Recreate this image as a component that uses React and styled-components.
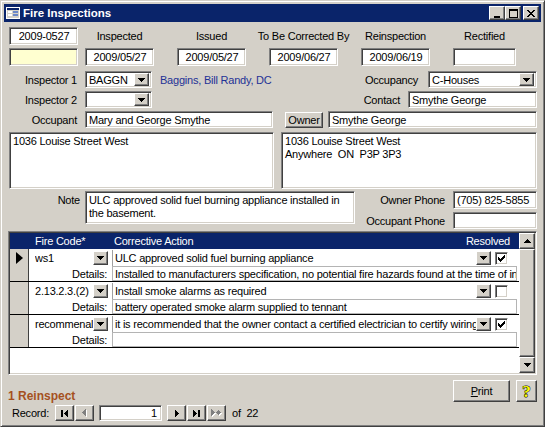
import React from 'react';
import styled, { createGlobalStyle, css } from 'styled-components';

const FACE = '#d4d0c8';
const NAVY = '#0a246a';

const GlobalStyle = createGlobalStyle`
  * { box-sizing: border-box; }
  html, body { margin: 0; padding: 0; background: ${FACE}; }
  body {
    font-family: "Liberation Sans", Arial, sans-serif;
    font-size: 11px;
    letter-spacing: -0.22px;
    color: #000;
  }
`;

const raised = css`
  background: ${FACE};
  border: 1px solid;
  border-color: #ffffff #404040 #404040 #ffffff;
  box-shadow: inset -1px -1px 0 #808080;
`;

const sunken = css`
  border: 1px solid;
  border-color: #808080 #ffffff #ffffff #808080;
  box-shadow: inset 1px 1px 0 #404040, inset -1px -1px 0 ${FACE};
`;

/* ---------- window chrome ---------- */
const Window = styled.div`
  width: 545px;
  height: 427px;
  display: flex;
  flex-direction: column;
  padding: 3px;
  background: ${FACE};
  border: 1px solid;
  border-color: ${FACE} #404040 #404040 ${FACE};
  box-shadow: inset 1px 1px 0 #ffffff, inset -1px -1px 0 #808080;
`;

const TitleBar = styled.div`
  flex: none;
  height: 18px;
  display: flex;
  align-items: center;
  padding: 0 2px;
  background: ${NAVY};
  color: #fff;
`;

const TitleText = styled.span`
  flex: 1;
  margin-left: 3px;
  font-weight: bold;
  font-size: 11.5px;
  letter-spacing: 0;
  white-space: nowrap;
`;

const CaptionButton = styled.div`
  ${raised}
  width: 16px;
  height: 14px;
  margin-left: ${(p) => p.$ml || 0}px;
  display: flex;
  align-items: center;
  justify-content: center;
`;

/* ---------- form body ---------- */
const Body = styled.div`
  flex: 1;
  display: flex;
  flex-direction: column;
  padding: 5px 4px 0 5px;
  min-height: 0;
`;

const DateGrid = styled.div`
  flex: none;
  display: grid;
  grid-template-columns: 76px 92px 92px 92px 92px 63px;
  grid-template-rows: 18px 18px;
  row-gap: 3px;
`;

const ColLabel = styled.div`
  width: ${(p) => p.$w || 69}px;
  display: flex;
  justify-content: center;
  align-items: center;
  white-space: nowrap;
`;

const Row = styled.div`
  flex: none;
  display: flex;
  align-items: ${(p) => p.$align || 'center'};
  height: ${(p) => p.$h}px;
  margin-top: ${(p) => p.$mt || 0}px;
`;

const Label = styled.span`
  flex: none;
  width: ${(p) => (p.$w ? `${p.$w}px` : 'auto')};
  text-align: right;
  padding-right: ${(p) => p.$pr ?? 8}px;
  padding-top: ${(p) => p.$pt || 0}px;
  margin-left: ${(p) => (p.$push ? 'auto' : '0')};
  white-space: nowrap;
`;

const Box = styled.div`
  ${sunken}
  flex: ${(p) => (p.$grow ? '1 1 0' : 'none')};
  width: ${(p) => (p.$w ? `${p.$w}px` : 'auto')};
  height: ${(p) => p.$h || 18}px;
  margin-left: ${(p) => p.$ml || 0}px;
  background: ${(p) => p.$bg || '#ffffff'};
  padding: 1px 2px 1px 3px;
  display: flex;
  align-items: center;
  justify-content: ${(p) => (p.$center ? 'center' : 'flex-start')};
  white-space: nowrap;
  overflow: hidden;
`;

const MemoBox = styled(Box)`
  display: block;
  align-items: initial;
  padding: 2px 2px 1px 3px;
  line-height: 13px;
  white-space: nowrap;
`;

const ComboBox = styled(Box)`
  padding: 2px 2px 2px 3px;
`;

const ComboText = styled.span`
  flex: 1;
  overflow: hidden;
  white-space: nowrap;
`;

const DropButton = styled.div`
  ${raised}
  flex: none;
  width: ${(p) => p.$w || 15}px;
  height: ${(p) => p.$h || 13}px;
  display: flex;
  align-items: center;
  justify-content: center;
`;

const LinkText = styled.span`
  flex: 1;
  margin-left: 8px;
  color: #1f3296;
  white-space: nowrap;
`;

const PushButton = styled.button`
  ${raised}
  flex: none;
  width: ${(p) => p.$w}px;
  height: ${(p) => p.$h}px;
  margin-left: ${(p) => p.$ml || 0}px;
  padding: 0;
  font: inherit;
  letter-spacing: inherit;
  color: #000;
  display: flex;
  align-items: center;
  justify-content: center;
`;

const PhoneGrid = styled.div`
  margin-left: auto;
  display: grid;
  grid-template-columns: auto 84px;
  grid-template-rows: 18px 17px;
  row-gap: 3px;
  align-items: center;
`;

/* ---------- subform ---------- */
const Subform = styled.div`
  ${sunken}
  flex: none;
  height: 144px;
  margin: 2px 0 0 -1px;
  padding: 1px;
  background: #ffffff;
  display: flex;
`;

const SubMain = styled.div`
  flex: 1;
  display: flex;
  flex-direction: column;
  min-width: 0;
`;

const SubHeader = styled.div`
  flex: none;
  height: 16px;
  display: flex;
  align-items: center;
  background: ${NAVY};
  color: #fff;
  white-space: nowrap;
`;

const HeadCell = styled.span`
  flex: none;
  width: ${(p) => (p.$w ? `${p.$w}px` : 'auto')};
  padding-left: ${(p) => p.$pl || 0}px;
  padding-right: ${(p) => p.$pr || 0}px;
  margin-left: ${(p) => (p.$push ? 'auto' : '0')};
`;

const Record = styled.div`
  flex: none;
  height: 33px;
  display: flex;
  border-bottom: 1px solid #000;
`;

const Selector = styled.div`
  flex: none;
  width: 19px;
  background: ${FACE};
  border-right: 1px solid #404040;
  display: flex;
  justify-content: center;
  padding-top: 3px;
`;

const CurrentArrow = styled.div`
  width: 0;
  height: 0;
  border-left: 7px solid #000;
  border-top: 6px solid transparent;
  border-bottom: 6px solid transparent;
`;

const RecordBody = styled.div`
  flex: 1;
  display: flex;
  flex-direction: column;
  padding-top: 1px;
`;

const RecLine = styled.div`
  display: flex;
  align-items: center;
  height: ${(p) => p.$h}px;
`;

const CodeCombo = styled.div`
  flex: none;
  width: 77px;
  height: 16px;
  margin-left: 2px;
  display: flex;
  align-items: center;
  padding-left: 4px;
  overflow: hidden;
  white-space: nowrap;
`;

const ActionCombo = styled.div`
  flex: none;
  width: 379px;
  height: 16px;
  margin-left: 4px;
  border-left: 1px solid #a0a0a0;
  display: flex;
  align-items: center;
  padding-left: 2px;
  overflow: hidden;
`;

const DetailsLabel = styled.span`
  flex: none;
  width: 77px;
  margin-left: 2px;
  text-align: right;
  padding-right: 1px;
  white-space: nowrap;
`;

const DetailsBox = styled.div`
  flex: none;
  width: 405px;
  height: 15px;
  margin-left: 4px;
  border: 1px solid #b4b4b4;
  padding-left: 2px;
  display: flex;
  align-items: center;
  white-space: nowrap;
  overflow: hidden;
`;

const CheckBox = styled.div`
  ${sunken}
  flex: none;
  width: 13px;
  height: 13px;
  margin-left: 4px;
  background: #fff;
  display: flex;
  align-items: center;
  justify-content: center;
`;

const Filler = styled.div`
  flex: 1;
  background: #fff;
`;

const Scrollbar = styled.div`
  flex: none;
  width: 16px;
  display: flex;
  flex-direction: column;
  background: ${FACE};
`;

const ScrollButton = styled.div`
  ${raised}
  flex: none;
  height: 16px;
  display: flex;
  align-items: center;
  justify-content: center;
`;

const Thumb = styled.div`
  ${raised}
  flex: 1;
`;

/* ---------- footer ---------- */
const Footer = styled.div`
  flex: 1;
  display: flex;
  flex-direction: column;
  margin-left: -1px;
`;

const ActionRow = styled.div`
  flex: none;
  height: 27px;
  padding-top: 5px;
  display: flex;
  align-items: flex-end;
`;

const StatusText = styled.span`
  flex: 1;
  font-size: 12px;
  font-weight: bold;
  letter-spacing: 0;
  color: #a5501f;
  line-height: 13px;
  margin-bottom: -1px;
  white-space: nowrap;
`;

const HelpMark = styled.span`
  font-family: "Liberation Serif", "Times New Roman", serif;
  font-weight: bold;
  font-size: 17px;
  line-height: 1;
  color: #ffff00;
  -webkit-text-stroke: 1px #000;
  paint-order: stroke fill;
`;

const NavBar = styled.div`
  flex: none;
  height: 16px;
  margin-top: 3px;
  padding-left: 4px;
  display: flex;
  align-items: center;
  white-space: nowrap;
`;

const NavLabel = styled.span`
  flex: none;
  width: ${(p) => (p.$w ? `${p.$w}px` : 'auto')};
  margin-left: ${(p) => p.$ml || 0}px;
`;

const NavButton = styled.div`
  ${raised}
  flex: none;
  width: 19px;
  height: 16px;
  margin-left: ${(p) => p.$ml ?? 1}px;
  display: flex;
  align-items: center;
  justify-content: center;
`;

const NavInput = styled(Box)`
  justify-content: flex-end;
  padding-right: 4px;
`;

/* ---------- pixel glyphs ---------- */
const Px = ({ d, w, h, color = '#000', emboss }) => {
  const W = w + (emboss ? 1 : 0);
  const H = h + (emboss ? 1 : 0);
  return (
    <svg width={W} height={H} viewBox={`0 0 ${W} ${H}`} shapeRendering="crispEdges" style={{ display: 'block' }}>
      {emboss && <path d={d} fill="#fff" transform="translate(1 1)" />}
      <path d={d} fill={emboss ? '#808080' : color} />
    </svg>
  );
};

const G = {
  down: 'M0 0h7v1H0zM1 1h5v1H1zM2 2h3v1H2zM3 3h1v1H3z',
  up: 'M3 0h1v1H3zM2 1h3v1H2zM1 2h5v1H1zM0 3h7v1H0z',
  left: 'M3 0h1v1H3zM2 1h2v1H2zM1 2h3v1H1zM0 3h4v1H0zM1 4h3v1H1zM2 5h2v1H2zM3 6h1v1H3z',
  right: 'M0 0h1v1H0zM0 1h2v1H0zM0 2h3v1H0zM0 3h4v1H0zM0 4h3v1H0zM0 5h2v1H0zM0 6h1v1H0z',
  first:
    'M0 0h2v7H0zM6 0h1v1H6zM5 1h2v1H5zM4 2h3v1H4zM3 3h4v1H3zM4 4h3v1H4zM5 5h2v1H5zM6 6h1v1H6z',
  last:
    'M0 0h1v1H0zM0 1h2v1H0zM0 2h3v1H0zM0 3h4v1H0zM0 4h3v1H0zM0 5h2v1H0zM0 6h1v1H0zM5 0h2v7H5z',
  newrec:
    'M0 0h1v1H0zM0 1h2v1H0zM0 2h3v1H0zM0 3h4v1H0zM0 4h3v1H0zM0 5h2v1H0zM0 6h1v1H0zM7 1h1v5H7zM5 3h5v1H5zM6 2h1v1H6zM8 2h1v1H8zM6 4h1v1H6zM8 4h1v1H8z',
  check:
    'M6 0h1v1H6zM5 1h2v1H5zM0 2h1v1H0zM4 2h3v1H4zM0 3h2v1H0zM3 3h3v1H3zM0 4h5v1H0zM1 5h3v1H1zM2 6h1v1H2z',
  min: 'M1 7h6v2H1z',
  max: 'M0 0h9v2H0zM0 2h1v7H0zM8 2h1v7H8zM0 8h9v1H0z',
  close:
    'M0 0h2v1H0zM6 0h2v1H6zM1 1h2v1H1zM5 1h2v1H5zM2 2h4v1H2zM3 3h2v1H3zM2 4h4v1H2zM1 5h2v1H1zM5 5h2v1H5zM0 6h2v1H0zM6 6h2v1H6z',
};

const DownArrow = () => <Px d={G.down} w={7} h={4} />;

const FormIcon = () => (
  <svg width="14" height="12" viewBox="0 0 14 12" shapeRendering="crispEdges" style={{ display: 'block' }}>
    <rect x="0" y="0" width="14" height="12" fill="#ffffff" />
    <rect x="1" y="1" width="12" height="10" fill="#d4d0c8" />
    <rect x="1" y="1" width="12" height="2" fill="#0a246a" />
    <rect x="2" y="4" width="4" height="2" fill="#ffffff" />
    <rect x="7" y="4" width="5" height="2" fill="#6a86c8" />
    <rect x="2" y="7" width="4" height="2" fill="#ffffff" />
    <rect x="7" y="7" width="5" height="2" fill="#6a86c8" />
  </svg>
);

const records = [
  {
    code: 'ws1',
    action: 'ULC approved solid fuel burning appliance',
    details:
      'Installed to manufacturers specification, no potential fire hazards found at the time of inspection',
    resolved: true,
    current: true,
  },
  {
    code: '2.13.2.3.(2)',
    action: 'Install smoke alarms as required',
    details: 'battery operated smoke alarm supplied to tennant',
    resolved: false,
  },
  {
    code: 'recommenal',
    action:
      'it is recommended that the owner contact a certified electrician to certify wiring',
    details: '',
    resolved: true,
  },
];

export default function App() {
  return (
    <>
      <GlobalStyle />
      <Window>
        <TitleBar>
          <FormIcon />
          <TitleText>Fire Inspections</TitleText>
          <CaptionButton>
            <Px d={G.min} w={9} h={9} />
          </CaptionButton>
          <CaptionButton>
            <Px d={G.max} w={9} h={9} />
          </CaptionButton>
          <CaptionButton $ml={2}>
            <Px d={G.close} w={8} h={7} />
          </CaptionButton>
        </TitleBar>

        <Body>
          <DateGrid>
            <Box $w={69} $center>2009-0527</Box>
            <ColLabel>Inspected</ColLabel>
            <ColLabel>Issued</ColLabel>
            <ColLabel>To Be Corrected By</ColLabel>
            <ColLabel>Reinspection</ColLabel>
            <ColLabel $w={63}>Rectified</ColLabel>

            <Box $w={69} $bg="#ffffd0" />
            <Box $w={69} $center>2009/05/27</Box>
            <Box $w={69} $center>2009/05/27</Box>
            <Box $w={69} $center>2009/06/27</Box>
            <Box $w={69} $center>2009/06/19</Box>
            <Box $w={63} />
          </DateGrid>

          <Row $h={17} $mt={5}>
            <Label $w={76}>Inspector 1</Label>
            <ComboBox $w={67} $h={17}>
              <ComboText>BAGGN</ComboText>
              <DropButton>
                <DownArrow />
              </DropButton>
            </ComboBox>
            <LinkText>Baggins, Bill Randy, DC</LinkText>
            <Label $pr={10}>Occupancy</Label>
            <ComboBox $w={109} $h={17}>
              <ComboText>C-Houses</ComboText>
              <DropButton>
                <DownArrow />
              </DropButton>
            </ComboBox>
          </Row>

          <Row $h={17} $mt={3}>
            <Label $w={76}>Inspector 2</Label>
            <ComboBox $w={67} $h={17}>
              <ComboText />
              <DropButton>
                <DownArrow />
              </DropButton>
            </ComboBox>
            <Label $push>Contact</Label>
            <Box $w={129} $h={17}>Smythe George</Box>
          </Row>

          <Row $h={17} $mt={3}>
            <Label $w={76}>Occupant</Label>
            <Box $w={188} $h={17}>Mary and George Smythe</Box>
            <PushButton $w={38} $h={16} $ml={12}>Owner</PushButton>
            <Box $grow $h={17} $ml={5}>Smythe George</Box>
          </Row>

          <Row $h={57} $mt={4}>
            <MemoBox $w={265} $h={57}>1036 Louise Street West</MemoBox>
            <MemoBox $grow $h={57} $ml={7}>
              1036 Louise Street West
              <br />
              Anywhere&nbsp; ON&nbsp; P3P 3P3
            </MemoBox>
          </Row>

          <Row $h={38} $mt={2} $align="flex-start">
            <Label $w={76} $pr={5} $pt={3}>Note</Label>
            <MemoBox $w={270} $h={33}>
              ULC approved solid fuel burning appliance installed in
              <br />
              the basement.
            </MemoBox>
            <PhoneGrid>
              <Label>Owner Phone</Label>
              <Box $h={18}>(705) 825-5855</Box>
              <Label>Occupant Phone</Label>
              <Box $h={17} />
            </PhoneGrid>
          </Row>

          <Subform>
            <SubMain>
              <SubHeader>
                <HeadCell $w={104} $pl={25}>Fire Code*</HeadCell>
                <HeadCell>Corrective Action</HeadCell>
                <HeadCell $push $pr={9}>Resolved</HeadCell>
              </SubHeader>
              {records.map((r, i) => (
                <Record key={i}>
                  <Selector>{r.current && <CurrentArrow />}</Selector>
                  <RecordBody>
                    <RecLine $h={16}>
                      <CodeCombo>
                        <ComboText>{r.code}</ComboText>
                        <DropButton $h={14}>
                          <DownArrow />
                        </DropButton>
                      </CodeCombo>
                      <ActionCombo>
                        <ComboText>{r.action}</ComboText>
                        <DropButton $h={14}>
                          <DownArrow />
                        </DropButton>
                      </ActionCombo>
                      <CheckBox>
                        {r.resolved && <Px d={G.check} w={7} h={7} />}
                      </CheckBox>
                    </RecLine>
                    <RecLine $h={15}>
                      <DetailsLabel>Details:</DetailsLabel>
                      <DetailsBox>{r.details}</DetailsBox>
                    </RecLine>
                  </RecordBody>
                </Record>
              ))}
              <Filler />
            </SubMain>
            <Scrollbar>
              <ScrollButton>
                <Px d={G.up} w={7} h={4} />
              </ScrollButton>
              <Thumb />
              <ScrollButton>
                <Px d={G.down} w={7} h={4} />
              </ScrollButton>
            </Scrollbar>
          </Subform>

          <Footer>
            <ActionRow>
              <StatusText>1 Reinspect</StatusText>
              <PushButton $w={57} $h={22}>
                <span>
                  <u>P</u>rint
                </span>
              </PushButton>
              <PushButton $w={21} $h={22} $ml={6}>
                <HelpMark>?</HelpMark>
              </PushButton>
            </ActionRow>
            <NavBar>
              <NavLabel $w={43}>Record:</NavLabel>
              <NavButton $ml={0}>
                <Px d={G.first} w={7} h={7} />
              </NavButton>
              <NavButton>
                <Px d={G.left} w={4} h={7} emboss />
              </NavButton>
              <NavInput $w={63} $h={16} $ml={5}>1</NavInput>
              <NavButton $ml={5}>
                <Px d={G.right} w={4} h={7} />
              </NavButton>
              <NavButton>
                <Px d={G.last} w={7} h={7} />
              </NavButton>
              <NavButton>
                <Px d={G.newrec} w={10} h={7} emboss />
              </NavButton>
              <NavLabel $ml={6}>of&nbsp; 22</NavLabel>
            </NavBar>
          </Footer>
        </Body>
      </Window>
    </>
  );
}
